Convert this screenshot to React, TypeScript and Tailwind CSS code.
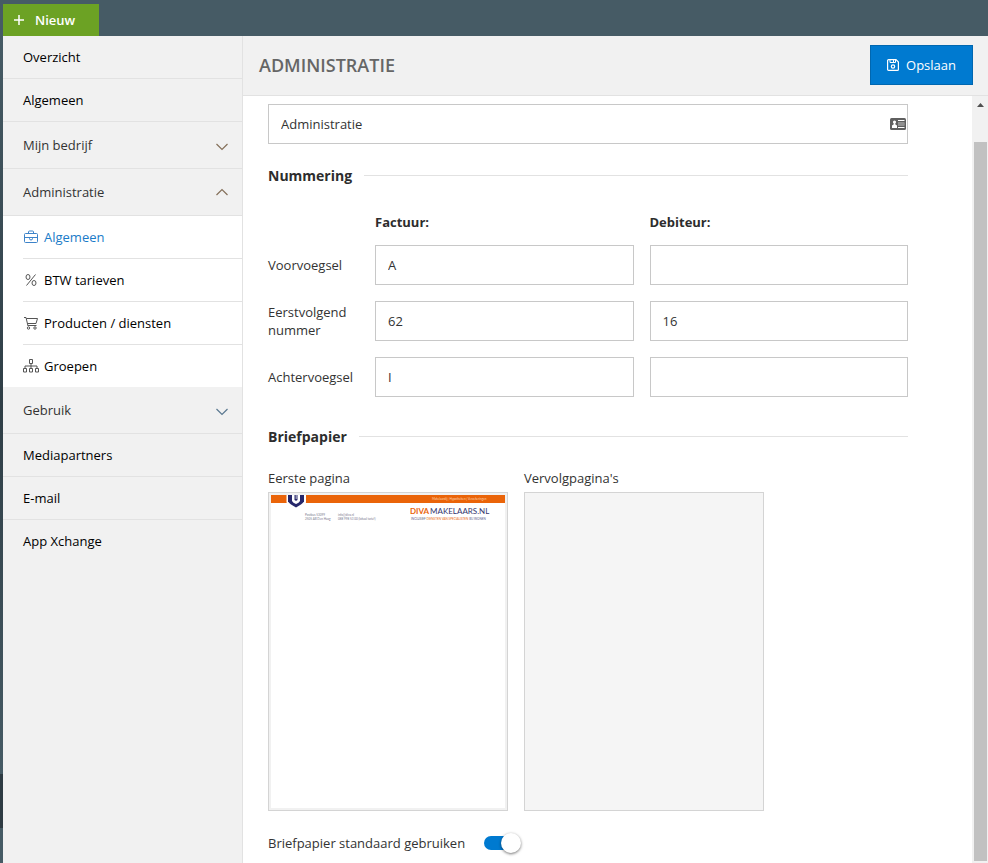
import { ReactNode, useState } from "react";

interface MenuItemProps {
  title: string;
}

interface SubItemProps {
  title: string;
  icon: ReactNode;
  active?: boolean;
}

interface FieldProps {
  label: string;
  value: string;
}

const iconProps = {
  fill: "none",
  stroke: "currentColor",
  strokeWidth: 1,
  "aria-hidden": true,
};

function Chevron({ open }: { open?: boolean }) {
  return (
    <svg width="14" height="12" viewBox="0 0 14 12" {...iconProps}>
      <path
        strokeWidth="1.200"
        d={open ? "M1.5 9L7 3.500L12.5 9" : "M1.5 5L7 10.500L12.5 5"}
      />
    </svg>
  );
}

function BriefcaseIcon() {
  return (
    <svg width="16" height="14" viewBox="0 0 16 14" {...iconProps}>
      <path d="M2.5 3.500h11a1 1 0 0 1 1 1v7a1 1 0 0 1-1 1h-11a1 1 0 0 1-1-1v-7a1 1 0 0 1 1-1zM5.500 3.500v-1.500a1 1 0 0 1 1-1h3a1 1 0 0 1 1 1v1.500M1.500 7.500h13M6.500 7.500v1a1.500 1.500 0 0 0 3 0v-1" />
    </svg>
  );
}

function PercentIcon() {
  return (
    <svg width="16" height="14" viewBox="0 0 16 14" {...iconProps}>
      <path d="M12.500 1.500L3.500 12.500" />
      <ellipse cx="5" cy="4" rx="2" ry="2.500" />
      <ellipse cx="11" cy="10" rx="2" ry="2.500" />
    </svg>
  );
}

function CartIcon() {
  return (
    <svg width="16" height="14" viewBox="0 0 16 14" {...iconProps}>
      <path d="M1 1.500h2L5 10M3.400 2.500h11.100L13 7.500H4.500M5 9.500h8.500" />
      <circle cx="5.500" cy="12" r="1.200" />
      <circle cx="12" cy="12" r="1.200" />
    </svg>
  );
}

function SitemapIcon() {
  return (
    <svg width="16" height="14" viewBox="0 0 16 14" {...iconProps}>
      <path d="M6.500 .5h3v4h-3zM.5 9.500h3v3.500h-3zM6.500 9.500h3v3.500h-3zM12.500 9.500h3v3.500h-3zM8 4.500v5M2 9.500v-2.500h12v2.500" />
    </svg>
  );
}

function SaveIcon() {
  return (
    <svg width="12" height="12" viewBox="0 0 12 12" {...iconProps}>
      <path
        strokeWidth="1.200"
        d="M1.600 .6h7.400l2.400 2.400v7.400a1 1 0 0 1-1 1h-8.800a1 1 0 0 1-1-1v-8.800a1 1 0 0 1 1-1z"
      />
      <path d="M3 1v2.500h5.500v-2.500M6.500 1v2.500" />
      <circle cx="6" cy="7.500" r="1.700" strokeWidth="1.200" />
    </svg>
  );
}

function ContactCardIcon() {
  return (
    <svg width="16" height="12" viewBox="0 0 16 12" aria-hidden="true">
      <rect width="16" height="12" rx="1.500" fill="#5f5f5f" />
      <circle cx="4.500" cy="4" r="1.600" fill="#fff" />
      <path d="M3.800 4h1.400v2.200l1.800 1.300v2.500h-5v-2.500l1.800-1.300z" fill="#fff" />
      <path d="M8 2.500h6.500M8 9.500h6.500" stroke="#fff" />
      <path d="M8 4.500h6.500v3h-6.500z" fill="#c4c4c4" />
      <path d="M8 6h6.500" stroke="#5f5f5f" />
    </svg>
  );
}

function MenuItem(props: MenuItemProps) {
  return (
    <a
      href="#"
      className="flex h-[43px] items-center border-b border-[#e2e2e2] pl-5 text-black"
    >
      {props.title}
    </a>
  );
}

function MenuGroup(props: { title: string; open?: boolean; color: string }) {
  return (
    <button
      type="button"
      aria-expanded={!!props.open}
      className="flex h-[47px] w-full items-center justify-between border-b border-[#e2e2e2] pr-[13px] pl-5 text-[#333]"
    >
      {props.title}
      <span className={props.color}>
        <Chevron open={props.open} />
      </span>
    </button>
  );
}

function SubItem(props: SubItemProps) {
  return (
    <li className="ml-5 h-[43px] border-b border-[#e2e2e2] last:h-[42px] last:border-b-0">
      <a
        href="#"
        className={
          props.active
            ? "flex h-full items-center gap-[5px] text-[#1a7bc8]"
            : "flex h-full items-center gap-[5px] text-black"
        }
      >
        <span className={props.active ? "text-[#3c83c9]" : "text-[#555]"}>
          {props.icon}
        </span>
        {props.title}
      </a>
    </li>
  );
}

function SectionTitle(props: { title: string }) {
  return (
    <div className="flex items-center gap-3">
      <h2 className="text-sm leading-[19px] font-bold text-[#2d2d2d]">
        {props.title}
      </h2>
      <div className="h-px flex-1 bg-[#e2e2e2]" />
    </div>
  );
}

function Field(props: FieldProps) {
  return (
    <input
      type="text"
      aria-label={props.label}
      defaultValue={props.value}
      className="h-10 w-full min-w-0 border border-[#c8c8c8] bg-white px-3 text-[#333] outline-none"
    />
  );
}

function Letterhead() {
  return (
    <svg
      viewBox="0 0 234 313"
      className="block w-full bg-white"
      role="img"
      aria-label="Briefpapier eerste pagina"
      fontFamily="Lato, sans-serif"
    >
      <rect width="234" height="8" fill="#ea6409" />
      <path d="M15.500 0h19.500v7.500q-2 3-9.500 6.500q-7.500-3.500-10-6.500z" fill="#fff" />
      <path d="M17 0h16v6.500q-1.500 2.500-8 6q-6.500-3.500-8-6z" fill="#26276b" />
      <path d="M21 0h2.500v5q1.500 1.500 3 0v-5h2.500v6q-1 2-4 3q-3-1-4-3z" fill="#fff" />
      <path d="M24.500 0h1.500v4h-1.500z" fill="#8d8eb0" />
      <text x="161" y="5" fontSize="3" fill="#ffd3b0">
        Makelaardij | Hypotheken | Verzekeringen
      </text>
      <g fontSize="3" fill="#77778c">
        <text x="34" y="21">Postbus 53099</text>
        <text x="34" y="25">2505 AB Den Haag</text>
        <text x="67" y="21">info@diva.nl</text>
        <text x="67" y="25">088 998 53 00 (lokaal tarief)</text>
      </g>
      <text x="139" y="19" fontSize="8" fill="#34356d">
        <tspan fontWeight="700" fill="#ea6409">DIVA</tspan>
        <tspan dx="1">MAKELAARS.NL</tspan>
      </text>
      <text x="140" y="25" fontSize="3" fill="#55567f">
        INCLUSIEF <tspan fill="#ea6409">DIENSTEN VAN SPECIALISTEN</tspan> BIJ WONEN
      </text>
    </svg>
  );
}

const numbering = [
  { title: "Voorvoegsel", invoice: "A", debtor: "" },
  { title: "Eerstvolgend nummer", invoice: "62", debtor: "16" },
  { title: "Achtervoegsel", invoice: "I", debtor: "" },
];

export default function App() {
  const [useLetterhead, setUseLetterhead] = useState(true);

  return (
    <div className="flex h-screen flex-col bg-[#465b65] font-['Open_Sans',sans-serif] text-[13px] leading-[18px] text-[#333]">
      <header className="flex h-9 shrink-0 items-end pl-[3px]">
        <button
          type="button"
          className="flex h-8 w-24 items-center gap-[11px] bg-[#6ca224] pl-[11px] font-semibold text-white"
        >
          <svg width="10" height="10" viewBox="0 0 10 10" aria-hidden="true">
            <path d="M5 0v10M0 5h10" stroke="currentColor" strokeWidth="1.500" />
          </svg>
          Nieuw
        </button>
      </header>

      <div className="flex min-h-0 flex-1">
        <div className="flex w-[3px] shrink-0 flex-col" aria-hidden="true">
          <div className="flex-1 bg-linear-to-b from-[#465b65] via-[#2f3e46] via-50% to-[#465b65]" />
          <div className="h-[54px] bg-[#2e3b43]" />
          <div className="h-[35px] bg-[#465b65]" />
        </div>

        <nav className="w-60 shrink-0 border-r border-[#e2e2e2] bg-[#f1f1f1]">
          <MenuItem title="Overzicht" />
          <MenuItem title="Algemeen" />
          <MenuGroup title="Mijn bedrijf" color="text-[#85705a]" />
          <MenuGroup title="Administratie" open color="text-[#85705a]" />
          <ul className="bg-white">
            <SubItem title="Algemeen" icon={<BriefcaseIcon />} active />
            <SubItem title="BTW tarieven" icon={<PercentIcon />} />
            <SubItem title="Producten / diensten" icon={<CartIcon />} />
            <SubItem title="Groepen" icon={<SitemapIcon />} />
          </ul>
          <MenuGroup title="Gebruik" color="text-[#5a7890]" />
          <MenuItem title="Mediapartners" />
          <MenuItem title="E-mail" />
          <a href="#" className="flex h-[42px] items-center pl-5 text-black">
            App Xchange
          </a>
        </nav>

        <main className="flex min-w-0 flex-1 flex-col bg-white">
          <div className="flex h-[60px] shrink-0 items-center justify-between border-b border-[#e2e2e2] bg-[#f1f1f1] pr-[15px] pb-px pl-4">
            <h1 className="text-lg leading-6 font-semibold text-[#666] uppercase">
              Administratie
            </h1>
            <button
              type="button"
              className="flex h-10 items-center gap-[7px] border border-[#0067b0] bg-[#007ad0] px-4 text-white"
            >
              <SaveIcon />
              Opslaan
            </button>
          </div>

          <div className="flex min-h-0 flex-1">
            <form className="min-w-0 flex-1 overflow-hidden pt-2 pl-[25px]">
              <div className="flex w-full max-w-[640px] flex-col">
                <div className="flex h-10 items-center border border-[#c8c8c8] pr-px">
                  <input
                    type="text"
                    aria-label="Naam administratie"
                    defaultValue="Administratie"
                    className="h-full min-w-0 flex-1 px-3 outline-none"
                  />
                  <ContactCardIcon />
                </div>

                <div className="mt-[22px]">
                  <SectionTitle title="Nummering" />
                </div>

                <div className="mt-7 grid grid-cols-[91px_1fr_1fr] gap-x-4 font-bold text-[#2d2d2d]">
                  <span className="col-start-2">Factuur:</span>
                  <span>Debiteur:</span>
                </div>
                <div className="mt-[14px] flex flex-col gap-4">
                  {numbering.map((row) => (
                    <div
                      key={row.title}
                      className="grid grid-cols-[91px_1fr_1fr] items-center gap-x-4"
                    >
                      <span>{row.title}</span>
                      <Field
                        label={`${row.title} factuur`}
                        value={row.invoice}
                      />
                      <Field
                        label={`${row.title} debiteur`}
                        value={row.debtor}
                      />
                    </div>
                  ))}
                </div>

                <div className="mt-[30px]">
                  <SectionTitle title="Briefpapier" />
                </div>

                <div className="mt-[23px] flex gap-4">
                  <div className="flex w-60 flex-col gap-[5px]">
                    <span>Eerste pagina</span>
                    <div className="h-[319px] border border-[#d4d4d4] bg-[#f1f1f1] p-[2px]">
                      <Letterhead />
                    </div>
                  </div>
                  <div className="flex w-60 flex-col gap-[5px]">
                    <span>Vervolgpagina's</span>
                    <div className="h-[319px] border border-[#d4d4d4] bg-[#f5f5f5]" />
                  </div>
                </div>

                <label className="mt-[22px] flex items-center gap-[19px]">
                  Briefpapier standaard gebruiken
                  <span className="relative flex h-5 w-[38px] items-center">
                    <input
                      type="checkbox"
                      role="switch"
                      checked={useLetterhead}
                      onChange={(e) => setUseLetterhead(e.target.checked)}
                      className="peer h-[14px] w-[34px] appearance-none rounded-full bg-[#bbb] checked:bg-[#007ad0]"
                    />
                    <span className="pointer-events-none absolute left-0 size-5 rounded-full bg-white shadow-[0_1px_3px_rgba(0,0,0,0.55)] peer-checked:left-[17px]" />
                  </span>
                </label>
              </div>
            </form>

            <div
              className="flex w-4 shrink-0 flex-col items-center bg-[#f1f1f1] pt-[7px] pb-[2px]"
              aria-hidden="true"
            >
              <svg width="7" height="4" viewBox="0 0 7 4" className="shrink-0">
                <path d="M0 4L3.500 0L7 4z" fill="#505050" />
              </svg>
              <div className="mt-[35px] w-[13px] flex-1 bg-[#c1c1c1]" />
            </div>
          </div>
        </main>
      </div>
    </div>
  );
}
